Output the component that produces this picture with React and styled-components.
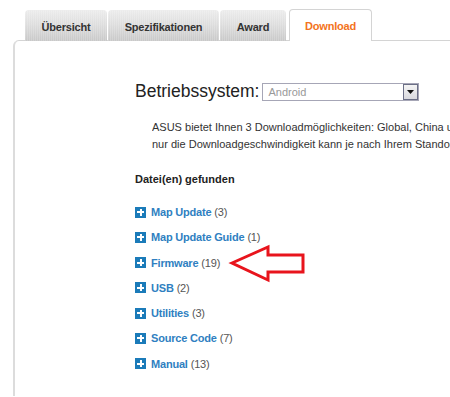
import React from 'react'
import styled, { createGlobalStyle } from 'styled-components'

const Global = createGlobalStyle`
  html, body {
    margin: 0;
    padding: 0;
    background: #fff;
    font-family: Arial, "Liberation Sans", sans-serif;
  }
`

const Page = styled.div`
  width: 450px;
  height: 397px;
  padding: 9px 0 0 13px;
  box-sizing: border-box;
  position: relative;
`

const TabBar = styled.div`
  display: flex;
  align-items: flex-end;
  padding-left: 12px;
  height: 32px;
  position: relative;
  z-index: 1;
`

const Tab = styled.div`
  width: ${p => p.w}px;
  height: ${p => (p.active ? 32 : 31)}px;
  margin-right: ${p => p.gap}px;
  box-sizing: border-box;
  display: flex;
  align-items: center;
  justify-content: center;
  font-size: 11px;
  letter-spacing: -0.2px;
  font-weight: bold;
  border-radius: 4px 4px 0 0;
  color: ${p => (p.active ? '#f37321' : '#333')};
  background: ${p =>
    p.active
      ? '#fff'
      : 'repeating-linear-gradient(90deg, rgba(255,255,255,0.18) 0 1px, transparent 1px 2px), linear-gradient(#ececec, #dedede 45%, #c8c8c8)'};
  border: ${p => (p.active ? '1px solid #d4d4d4' : 'none')};
  border-bottom: none;
  padding-top: ${p => (p.active ? 1 : 2)}px;
`

const Panel = styled.div`
  margin-top: -1px;
  border-top: 1px solid #d4d4d4;
  border-left: 2px solid #dcdcdc;
  border-right: 0 none;
  border-top-left-radius: 6px;
  height: 356px;
  box-sizing: border-box;
  padding: 40px 0 0 120px;
`

const OsRow = styled.div`
  display: flex;
  align-items: center;
  gap: 3px;
`

const OsLabel = styled.span`
  font-size: 17.5px;
  color: #222;
`

const Select = styled.div`
  width: 157px;
  height: 18px;
  box-sizing: border-box;
  border: 1px solid #a6a6b6;
  display: flex;
  align-items: center;
  justify-content: space-between;
  padding-left: 5px;
  font-size: 11px;
  color: #999;
  margin-top: 1px;
`

const SelectButton = styled.div`
  width: 15px;
  height: 16px;
  box-sizing: border-box;
  border: 1px solid #6b6f86;
  background: linear-gradient(#f4f4f4, #d9d9de);
  display: flex;
  align-items: center;
  justify-content: center;
`

const Info = styled.p`
  margin: 17px 0 0 17px;
  font-size: 11px;
  line-height: 17px;
  color: #333;
  white-space: nowrap;
  overflow: hidden;
`

const Found = styled.div`
  margin-top: 20px;
  font-size: 11px;
  font-weight: bold;
  color: #222;
`

const List = styled.ul`
  list-style: none;
  margin: 20px 0 0;
  padding: 0;
  display: flex;
  flex-direction: column;
  gap: 11.3px;
`

const Item = styled.li`
  display: flex;
  align-items: center;
  height: 14px;
  font-size: 11px;
  letter-spacing: -0.2px;
`

const PlusBox = styled.span`
  width: 11px;
  height: 11px;
  margin-right: 5px;
  background: #1b7bb9;
  position: relative;
  flex: none;
  &::before, &::after {
    content: '';
    position: absolute;
    background: #fff;
  }
  &::before { left: 2px; top: 4.5px; width: 7px; height: 2px; }
  &::after { left: 4.5px; top: 2px; width: 2px; height: 7px; }
`

const LinkText = styled.a`
  color: #2f7fc1;
  font-weight: bold;
  text-decoration: none;
`

const Count = styled.span`
  color: #555;
  margin-left: 3px;
`

const Arrow = styled.svg`
  position: absolute;
  left: 228px;
  top: 243px;
`

const files = [
  ['Map Update', 3],
  ['Map Update Guide', 1],
  ['Firmware', 19],
  ['USB', 2],
  ['Utilities', 3],
  ['Source Code', 7],
  ['Manual', 13],
]

export default function App() {
  return (
    <Page>
      <Global />
      <TabBar>
        <Tab w={82} gap={1}>Übersicht</Tab>
        <Tab w={111} gap={1}>Spezifikationen</Tab>
        <Tab w={66} gap={3}>Award</Tab>
        <Tab w={83} gap={0} active>Download</Tab>
      </TabBar>
      <Panel>
        <OsRow>
          <OsLabel>Betriebssystem:</OsLabel>
          <Select>
            Android
            <SelectButton>
              <svg width="7" height="4" viewBox="0 0 7 4">
                <path d="M0 0h7L3.5 4z" fill="#111" />
              </svg>
            </SelectButton>
          </Select>
        </OsRow>
        <Info>
          ASUS bietet Ihnen 3 Downloadmöglichkeiten: Global, China und Europa. Alle Server bieten dieselben Dateien,
          <br />
          nur die Downloadgeschwindigkeit kann je nach Ihrem Standort variieren.
        </Info>
        <Found>Datei(en) gefunden</Found>
        <List>
          {files.map(([name, n]) => (
            <Item key={name}>
              <PlusBox />
              <LinkText href="#">{name}</LinkText>
              <Count>({n})</Count>
            </Item>
          ))}
        </List>
      </Panel>
      <Arrow width="80" height="42" viewBox="0 0 80 42">
        <path
          d="M4 20 L40 4 L40 12 L75 12 L75 29 L40 29 L40 37 Z"
          fill="none"
          stroke="#e8141c"
          strokeWidth="3"
          strokeLinejoin="miter"
        />
      </Arrow>
    </Page>
  )
}
